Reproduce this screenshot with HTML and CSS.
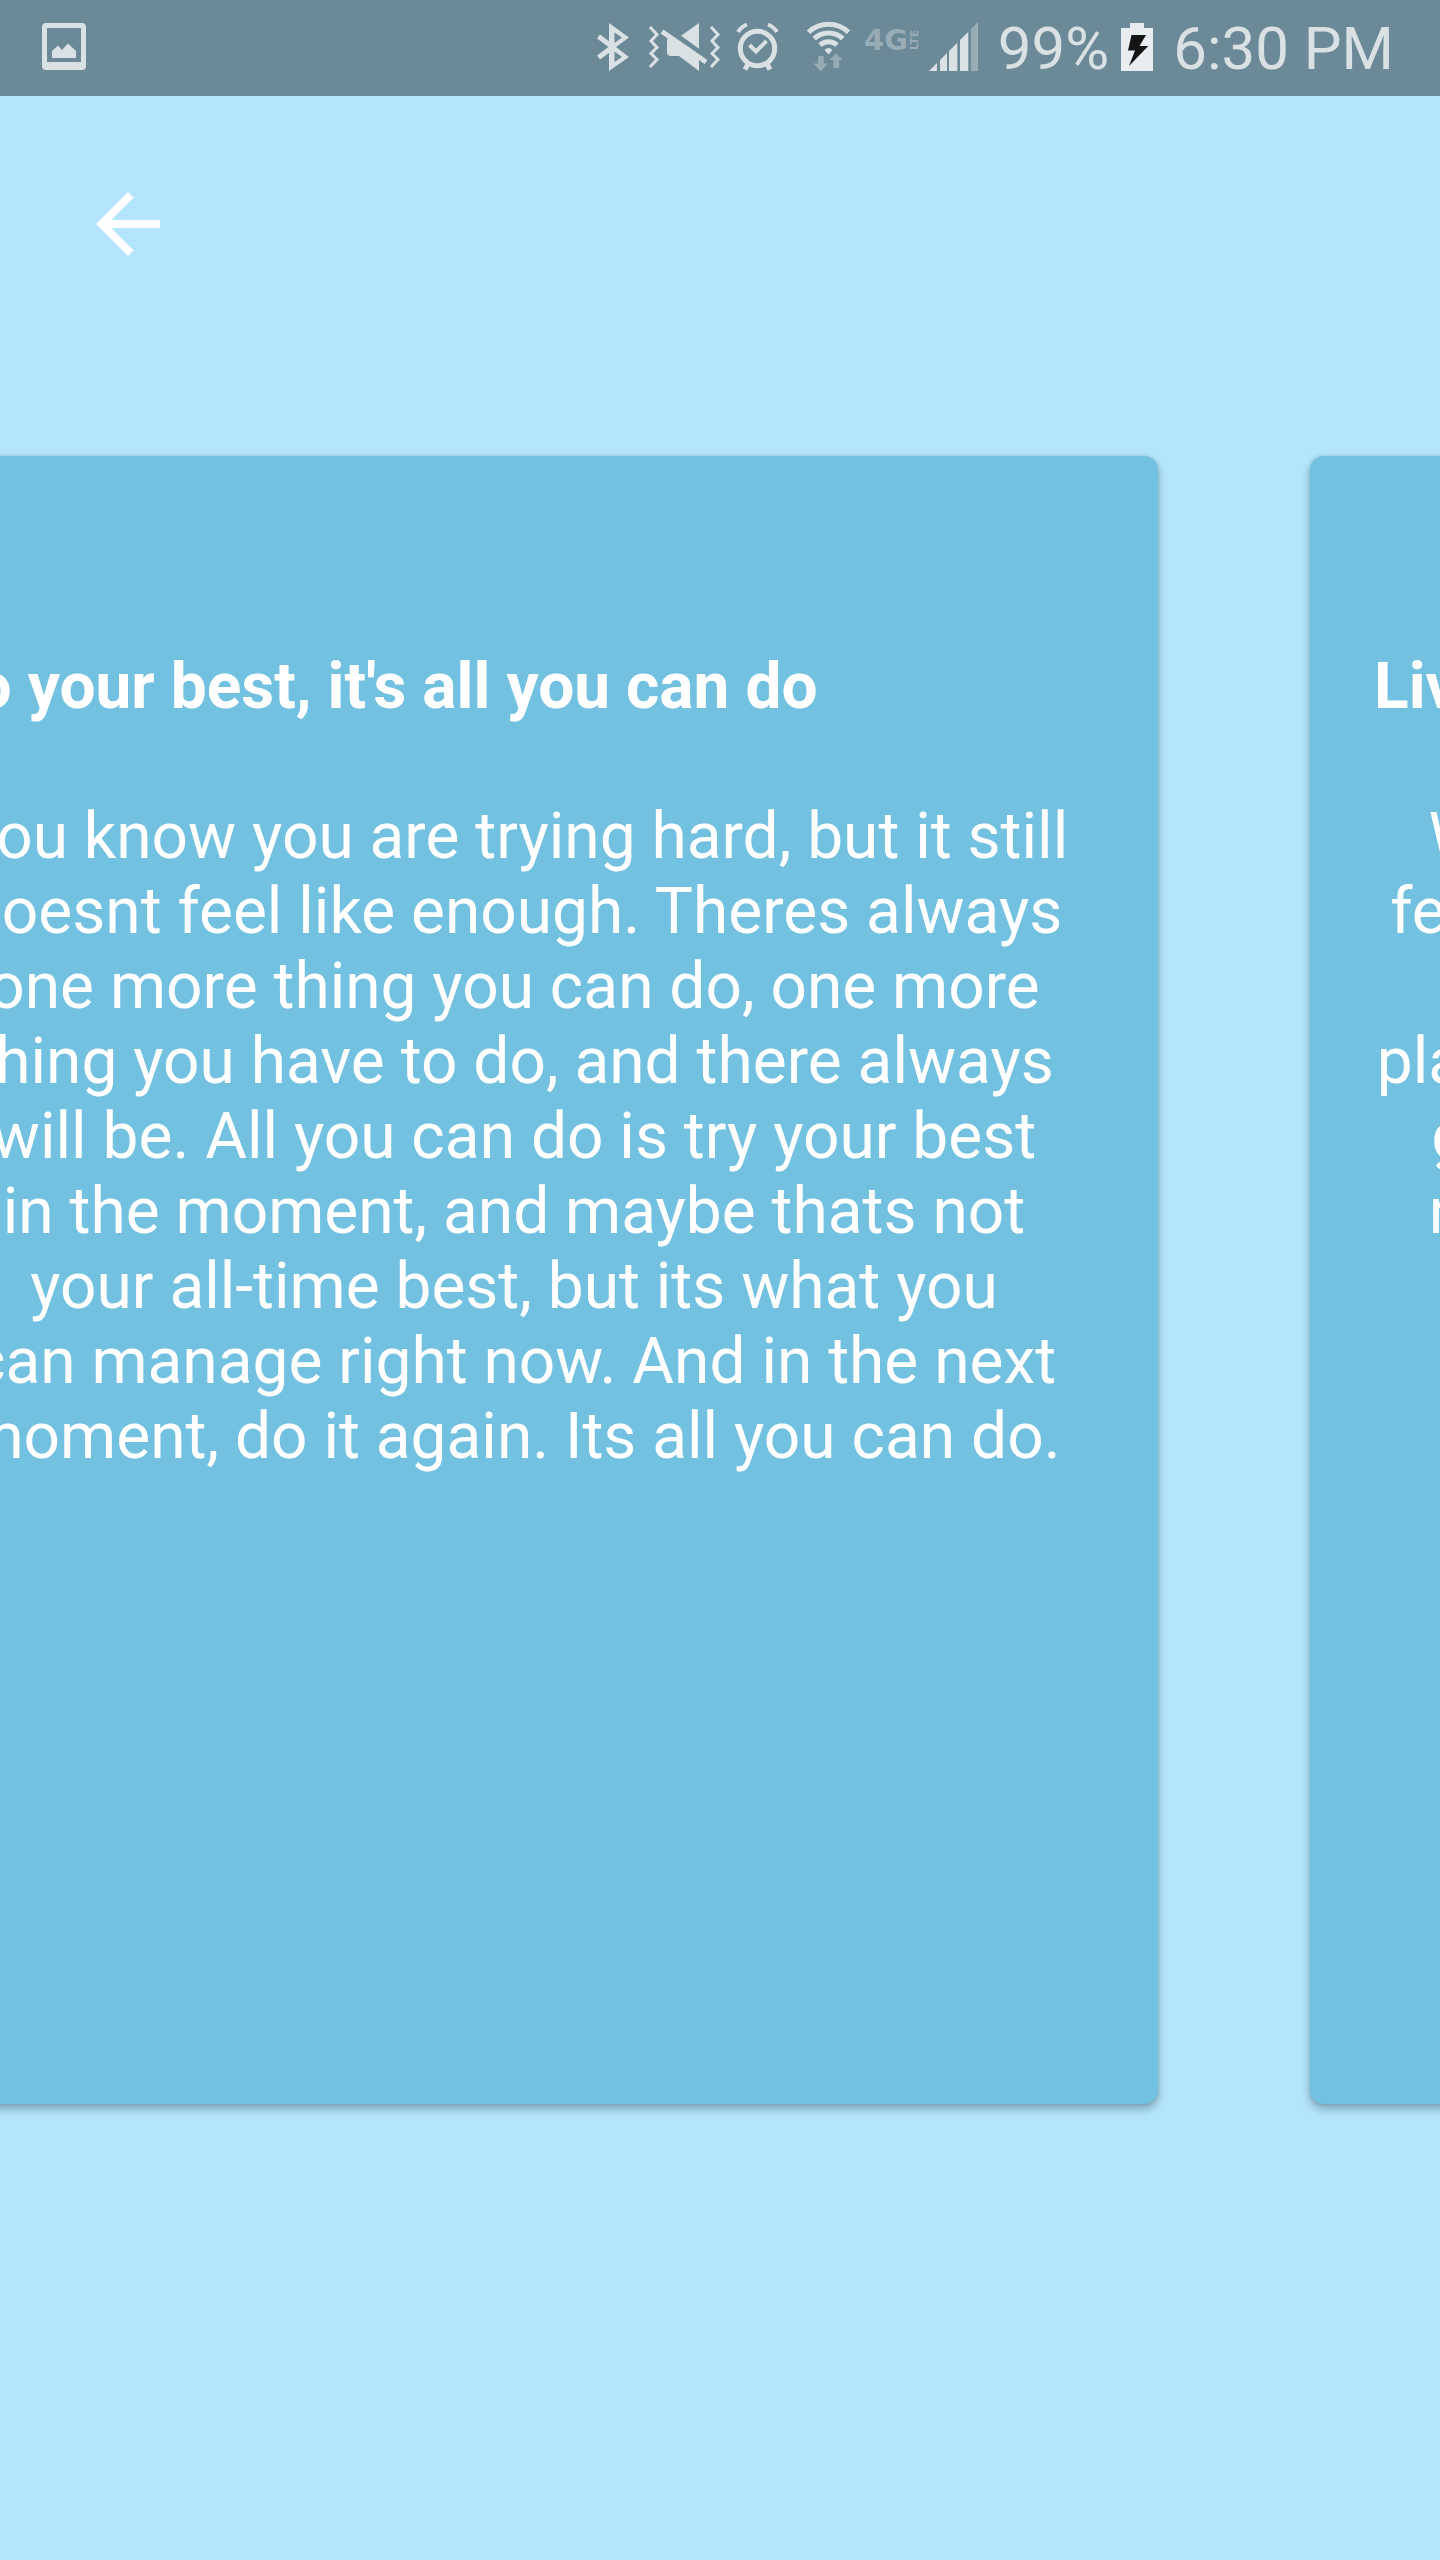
FILE: index.html
```html
<!DOCTYPE html>
<html lang="en">
<head>
<meta charset="utf-8">
<meta name="viewport" content="width=device-width, initial-scale=1">
<title>Do your best, it's all you can do</title>
<link rel="stylesheet" href="styles.css">
</head>
<body>
<div class="status-bar">
  <svg class="icon icon-picture" viewBox="0 0 44 48" aria-hidden="true">
    <path fill-rule="evenodd" d="M4 0H40Q44 0 44 4V43Q44 47 40 47H4Q0 47 0 43V4Q0 0 4 0ZM5 5V39H39V5Z"/>
    <path d="M10 28 16 22.500 20 27 26 20.500 34 28V35H10Z"/>
  </svg>
  <div class="status-right">
    <svg class="icon icon-bluetooth" viewBox="0 0 39 48" aria-hidden="true">
      <path class="line" stroke-width="5" d="M1.500 13.500 17 25M1.500 34.500 17 23"/>
      <path fill-rule="evenodd" d="M12 0 32 14.500 19 24 32 34 12 48ZM17.500 9.500V20L25 14.500ZM17.500 28.500V39L25 34Z"/>
    </svg>
    <svg class="icon icon-mute" viewBox="0 0 76 48" aria-hidden="true">
      <path class="line" stroke-width="3" d="M2 4 9 11.500 3 18 9 24.500 3 30.500 9 36.500 2 44M63 4 70 11.500 64 18 70 24.500 64 30.500 70 36.500 63 44"/>
      <path d="M33 12.700 51 0V25.700Z"/>
      <path d="M19 18Q19 14 23 14L51 33V48L31 33H23Q19 33 19 29Z"/>
      <path class="line" stroke-width="5" d="M14 8.500 58 39"/>
    </svg>
    <svg class="icon icon-alarm" viewBox="0 0 59 48" aria-hidden="true">
      <circle class="line" stroke-width="5" cx="21.500" cy="25.500" r="17.200"/>
      <path class="line" stroke-width="4" d="M13.500 22 20 28.500 30.500 18M2 9Q5 4 11 1.500M32 1.500Q38 4 41 9"/>
      <path class="line" stroke-width="5" d="M9 46.500 12 41M34 46.500 31 41"/>
    </svg>
    <svg class="icon icon-wifi" viewBox="0 0 45 48" aria-hidden="true">
      <path class="line" stroke-width="5" d="M1.500 9.300A29 29 0 0 1 41.500 9.300M7.200 15.600A21 21 0 0 1 35.800 15.600M13 22A12.500 12.500 0 0 1 30 22"/>
      <path d="M21.500 31.500 17.500 27Q21.500 23 25.500 27Z"/>
      <path class="dim" d="M11 33H16.700V40.500H20.700L13.700 48.500 6.700 40.500H11ZM29 30.300 35.700 37H32V45H26.300V37H22.300Z"/>
    </svg>
    <svg class="icon icon-network" viewBox="0 0 53 48" role="img" aria-label="4G LTE">
      <text class="network-main" x="0" y="27">4G</text>
      <text class="network-sub" transform="translate(54 27) rotate(-90)">LTE</text>
    </svg>
    <svg class="icon icon-signal" viewBox="0 0 57 48" aria-hidden="true">
      <path d="M0 48 8 40V48ZM11 48V37L18 30V48ZM20 48V28L28.300 19.700V48ZM31 48V17L39.300 8.700V48Z"/>
      <path class="dim" d="M42 48V6L49 -1V48Z"/>
    </svg>
    <span class="status-text">99%</span>
    <svg class="icon icon-battery" viewBox="0 0 40 48" aria-hidden="true">
      <path class="cell" d="M9 0H23V5H32V48H0V5H9Z"/>
      <path class="bolt" d="M10.500 12H25L18.500 23H27.300L8 43 14 27.500H7Z"/>
    </svg>
    <time class="status-text" datetime="18:30">6:30 PM</time>
  </div>
</div>
<header class="toolbar">
  <button class="back" type="button" aria-label="Back">
    <svg viewBox="0 0 24 24" aria-hidden="true"><path d="M20 11H7.830l5.590-5.590L12 4l-8 8 8 8 1.410-1.410L7.830 13H20v-2z"/></svg>
  </button>
</header>
<main class="pager">
  <div class="track">
    <article class="card">
      <h2>Do your best, it's all you can do</h2>
      <p>You know you are trying hard, but it still<br>
      doesnt feel like enough. Theres always<br>
      one more thing you can do, one more<br>
      thing you have to do, and there always<br>
      will be. All you can do is try your best<br>
      in the moment, and maybe thats not<br>
      your all-time best, but its what you<br>
      can manage right now. And in the next<br>
      moment, do it again. Its all you can do.</p>
    </article>
    <article class="card">
      <h2>Live in the moment</h2>
      <p>When you spend all day worrying and<br>
      feel that you keep losing what is in front<br>
      of you, know that the only<br>
      place you can live is right here, right now,<br>
      give yourself a moment to rest today,<br>
      remember to take it slow and look up</p>
    </article>
  </div>
</main>
</body>
</html>
```
FILE: styles.css
```css
* { box-sizing: border-box; }

body {
  display: flex;
  flex-direction: column;
  min-height: 100vh;
  margin: 0;
  background: #b3e5fc;
  color: #fff;
  font-family: Roboto, sans-serif;
  font-size: 64px;
  line-height: 75px;
}

.status-bar {
  display: flex;
  align-items: center;
  justify-content: space-between;
  height: 96px;
  padding: 0 46px 2px 42px;
  background: #6b8996;
  color: #dae1e5;
  font-size: 60px;
}

.status-right {
  display: flex;
  align-items: center;
  gap: 12px;
  white-space: nowrap;
}

.status-text { padding-top: 3px; }

.icon {
  flex: none;
  height: 48px;
  fill: #dae1e5;
  overflow: visible;
}

.icon .line { fill: none; stroke: #dae1e5; }
.icon .dim { fill: #98acb6; }
.icon .cell { fill: #e8edf0; }
.icon .bolt { fill: #141414; }

.icon-picture { width: 44px; }
.icon-bluetooth { width: 39px; }
.icon-mute { width: 76px; }
.icon-alarm { width: 59px; }
.icon-wifi { width: 45px; }
.icon-network { width: 53px; fill: #98acb6; font-family: "DejaVu Sans", sans-serif; font-weight: bold; }
.icon-signal { width: 57px; }
.icon-battery { width: 40px; }

.network-main { font-size: 29px; }
.network-sub { font-size: 11px; }

.toolbar { padding: 80px; }

.back {
  display: block;
  width: 96px;
  height: 96px;
  padding: 0;
  border: 0;
  background: none;
}

.back svg {
  display: block;
  width: 100%;
  height: 100%;
  fill: #fff;
}

.pager {
  display: flex;
  flex: 1;
  padding: 104px 0 456px;
  overflow: hidden;
}

.track {
  display: flex;
  flex: none;
  gap: 152px;
  width: 100%;
  margin-left: -130px;
}

.card {
  flex: none;
  width: calc(100% - 152px);
  padding: 193px 64px;
  border-radius: 14px;
  background: #73c1e1;
  box-shadow: 0 5px 9px rgba(0, 0, 0, 0.28), 0 0 4px rgba(0, 0, 0, 0.12);
}

.card h2 {
  margin: 0 0 75px;
  font-size: 64px;
  font-weight: bold;
  white-space: nowrap;
}

.card p {
  margin: 0;
  text-align: center;
  white-space: nowrap;
}
```
